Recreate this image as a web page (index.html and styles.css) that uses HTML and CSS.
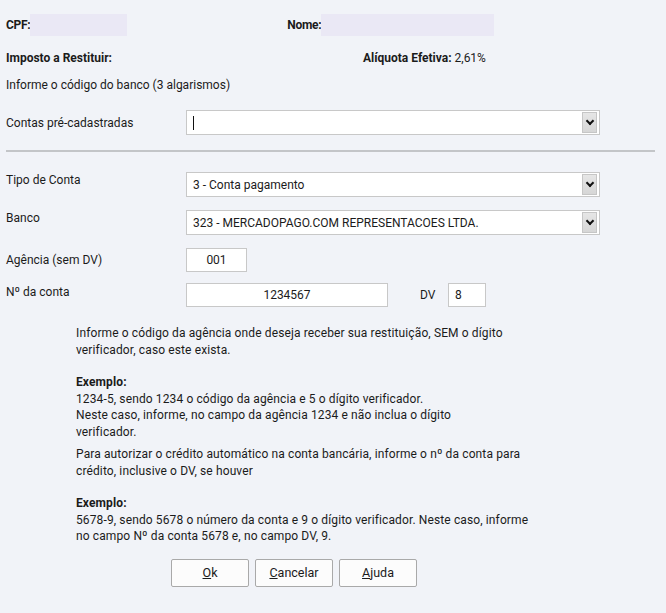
FILE: index.html
```html
<!DOCTYPE html>
<html lang="pt-BR">
<head>
    <meta charset="UTF-8">
    <meta name="viewport" content="width=device-width, initial-scale=1.0">
    <title>Dados Bancários</title>
    <link rel="stylesheet" href="styles.css">
</head>
<body>

    <div class="dados-header">
        <div class="campo-top">
            <b>CPF:</b><span class="oculto cpf"></span>
        </div>
        <div class="campo-top nome">
            <b>Nome:</b><span class="oculto nome-box"></span>
        </div>
    </div>

    <div class="linha-resumo">
        <b class="imposto">Imposto a Restituir:</b>
        <span><b>Alíquota Efetiva:</b> 2,61%</span>
    </div>

    <p class="dica-banco">Informe o código do banco (3 algarismos)</p>

    <div class="form-linha pre">
        <label>Contas pré-cadastradas</label>
        <div class="combo">
            <span class="combo-texto"><span class="cursor"></span></span>
            <span class="combo-seta"></span>
        </div>
    </div>

    <hr class="separador">

    <div class="form-linha">
        <label>Tipo de Conta</label>
        <div class="combo">
            <span class="combo-texto">3 - Conta pagamento</span>
            <span class="combo-seta"></span>
        </div>
    </div>

    <div class="form-linha">
        <label>Banco</label>
        <div class="combo">
            <span class="combo-texto">323 - MERCADOPAGO.COM REPRESENTACOES LTDA.</span>
            <span class="combo-seta"></span>
        </div>
    </div>

    <div class="form-linha curta">
        <label>Agência (sem DV)</label>
        <input class="campo agencia" type="text" value="001">
    </div>

    <div class="form-linha curta conta">
        <label>Nº da conta</label>
        <input class="campo numero" type="text" value="1234567">
        <span class="dv-label">DV</span>
        <input class="campo dv" type="text" value="8">
    </div>

    <div class="ajuda-texto">
        <p>Informe o código da agência onde deseja receber sua restituição, SEM o dígito verificador, caso este exista.</p>
        <p class="exemplo"><b>Exemplo:</b><br>
        1234-5, sendo 1234 o código da agência e 5 o dígito verificador.<br>
        Neste caso, informe, no campo da agência 1234 e não inclua o dígito<br>
        verificador.</p>
        <p>Para autorizar o crédito automático na conta bancária, informe o nº da conta para crédito, inclusive o DV, se houver</p>
        <p class="exemplo"><b>Exemplo:</b><br>
        5678-9, sendo 5678 o número da conta e 9 o dígito verificador. Neste caso, informe no campo Nº da conta 5678 e, no campo DV, 9.</p>
    </div>

    <div class="botoes">
        <button class="btn"><u>O</u>k</button>
        <button class="btn"><u>C</u>ancelar</button>
        <button class="btn"><u>A</u>juda</button>
    </div>

</body>
</html>
```

FILE: styles.css
```css
body {
    margin: 0;
    padding: 0 6px;
    background-color: #f1f3f8;
    font-family: Roboto, "Liberation Sans", sans-serif;
    font-size: 12px;
    color: #1b1b1b;
}

b {
    font-weight: 700;
}

.dados-header {
    display: flex;
    padding-top: 14px;
    height: 22px;
}

.campo-top {
    display: flex;
    align-items: center;
}

.campo-top b {
    letter-spacing: -0.3px;
}

.campo-top.nome {
    margin-left: 160px;
}

.oculto {
    display: block;
    height: 22px;
    background-color: #eae8f5;
}

.cpf {
    width: 97px;
}

.nome-box {
    width: 173px;
}

.linha-resumo {
    display: flex;
    margin-top: 14px;
    line-height: 16px;
}

.imposto {
    width: 357px;
}

.dica-banco {
    margin: 11px 0 0;
    line-height: 16px;
}

.form-linha {
    display: flex;
    align-items: flex-start;
}

.form-linha label {
    width: 180px;
    flex-shrink: 0;
    padding-top: 1px;
}

.form-linha.pre {
    margin-top: 17px;
}

.form-linha.pre label {
    padding-top: 6px;
}

.combo {
    display: flex;
    align-items: center;
    width: 412px;
    height: 23px;
    border: 1px solid #c8c8c8;
    background-color: #fff;
}

.combo-texto {
    flex: 1;
    padding-left: 6px;
}

.cursor {
    display: inline-block;
    width: 1px;
    height: 14px;
    background-color: #111;
    vertical-align: middle;
}

.combo-seta {
    position: relative;
    width: 13px;
    height: 19px;
    margin-right: 2px;
    background: linear-gradient(#e6e6e6, #d6d6d6);
    border: 1px solid #c6c6c6;
}

/* pequena seta em V dentro do botão do combo */
.combo-seta::after {
    content: "";
    position: absolute;
    left: 4px;
    top: 5px;
    width: 4px;
    height: 4px;
    border-right: 2px solid #111;
    border-bottom: 2px solid #111;
    transform: rotate(45deg);
}

.separador {
    border: none;
    border-top: 2px solid #c3c5c8;
    margin: 15px 5px 20px 0;
}

.form-linha + .form-linha {
    margin-top: 13px;
}

.form-linha.curta + .form-linha.curta {
    margin-top: 11px;
}

.form-linha.curta label {
    padding-top: 5px;
}

.campo {
    height: 22px;
    border: 1px solid #c8c8c8;
    background-color: #fff;
    font-family: inherit;
    font-size: 12px;
    color: #1b1b1b;
    padding: 0;
    margin: 0;
    box-sizing: content-box;
}

.agencia {
    width: 59px;
    text-align: center;
}

.numero {
    width: 200px;
    text-align: center;
}

.form-linha.conta label {
    padding-top: 2px;
}

.dv-label {
    margin-left: 32px;
    width: 28px;
    line-height: 24px;
}

.dv {
    padding-left: 6px;
    box-sizing: border-box;
    height: 24px;
    width: 38px;
}

.ajuda-texto {
    width: 460px;
    margin: 18px 0 0 70px;
    line-height: 16.5px;
    letter-spacing: 0.12px;
}

.ajuda-texto p {
    margin: 0 0 6px;
}

.ajuda-texto p.exemplo {
    margin-top: 16px;
}

.botoes {
    display: flex;
    gap: 6px;
    margin: 14px 0 0 165px;
}

.btn {
    width: 78px;
    height: 28px;
    border: 1px solid #a9a9a9;
    border-radius: 2px;
    background-color: #fcfcfc;
    font-family: inherit;
    font-size: 12.5px;
    color: #1b1b1b;
}
```
